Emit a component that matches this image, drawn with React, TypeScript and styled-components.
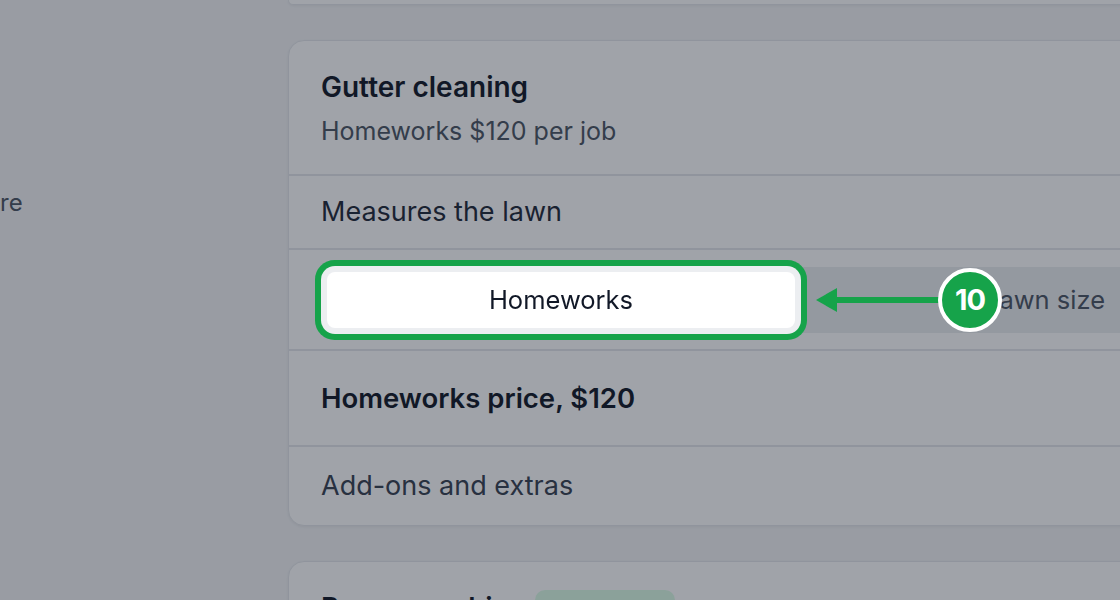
import React from 'react';
import styled, { createGlobalStyle } from 'styled-components';

const GlobalStyle = createGlobalStyle`
  html, body {
    margin: 0;
    padding: 0;
    background: #f3f4f6;
    overflow: hidden;
  }
  body {
    font-family: Inter, "Noto Sans", "Liberation Sans", sans-serif;
    color: #111827;
  }
`;

const App: React.FC = () => {
  return (
    <>
      <GlobalStyle />
      <Page>
        <Sidebar>
          <SideItem>re</SideItem>
        </Sidebar>

        <Main>
          <PrevCard />

          <Card>
            <Header>
              <Title>Gutter cleaning</Title>
              <Subtitle>Homeworks $120 per job</Subtitle>
            </Header>

            <Row $h={74}>
              <RowText>Measures the lawn</RowText>
            </Row>

            <Row $h={101}>
              <Track>
                <Segment $w={468} $active>
                  Homeworks
                </Segment>
                <Segment $w={500}>Lawn size</Segment>
              </Track>

              <Annotation>
                <Arrow width="123" height="26" viewBox="0 0 123 26">
                  <polygon points="0,13 21,1 21,25" fill="#16a34a" />
                  <rect x="18" y="10" width="105" height="6" fill="#16a34a" />
                </Arrow>
                <Badge>10</Badge>
              </Annotation>
            </Row>

            <Row $h={96}>
              <RowTitle>Homeworks price, $120</RowTitle>
            </Row>

            <Row $h={80}>
              <RowText $muted>Add-ons and extras</RowText>
            </Row>
          </Card>

          <Card>
            <Header>
              <TitleLine>
                <Title>Power washing</Title>
                <Pill>Most popular</Pill>
              </TitleLine>
              <Subtitle>Homeworks $90 per job</Subtitle>
            </Header>
          </Card>
        </Main>
      </Page>
      <Overlay />
    </>
  );
};

const Page = styled.div`
  display: flex;
  width: 1120px;
  height: 600px;
  overflow: hidden;
`;

const Sidebar = styled.aside`
  flex: none;
  width: 288px;
  padding-top: 187px;
  box-sizing: border-box;
`;

const SideItem = styled.div`
  font-size: 24px;
  line-height: 32px;
  color: #4b5563;
`;

const Main = styled.main`
  flex: none;
  width: 1060px;
  display: flex;
  flex-direction: column;
  gap: 35px;
`;

const Card = styled.section`
  background: #ffffff;
  border: 1px solid #e5e7eb;
  border-radius: 16px;
  box-shadow: 0 1px 3px rgba(0, 0, 0, 0.06);
  flex: none;
`;

const PrevCard = styled.div`
  height: 4px;
  background: #ffffff;
  border: 1px solid #e5e7eb;
  border-top: none;
  border-radius: 0 0 16px 16px;
  box-shadow: 0 1px 3px rgba(0, 0, 0, 0.06);
  flex: none;
`;

const Header = styled.div`
  padding: 28px 32px 27px;
`;

const TitleLine = styled.div`
  display: flex;
  align-items: center;
  gap: 8px;
`;

const Title = styled.h2`
  margin: 0;
  font-size: 28px;
  line-height: 36px;
  font-weight: 600;
  color: #111827;
`;

const Subtitle = styled.p`
  margin: 10px 0 0;
  font-size: 25px;
  line-height: 32px;
  color: #4b5563;
`;

const Pill = styled.span`
  display: inline-flex;
  align-items: center;
  height: 36px;
  width: 140px;
  justify-content: center;
  border-radius: 10px;
  background: #dcfce7;
  color: #15803d;
  font-size: 18px;
  font-weight: 500;
`;

const Row = styled.div<{ $h: number }>`
  position: relative;
  box-sizing: border-box;
  height: ${(p) => p.$h}px;
  padding: 0 32px;
  border-top: 2px solid #e5e7eb;
  display: flex;
  align-items: center;
`;

const RowText = styled.span<{ $muted?: boolean }>`
  font-size: 27px;
  line-height: 34px;
  color: ${(p) => (p.$muted ? '#374151' : '#1f2937')};
`;

const RowTitle = styled.span`
  font-size: 27.5px;
  line-height: 36px;
  font-weight: 600;
  color: #111827;
`;

const Track = styled.div`
  display: flex;
  padding: 5px 6px;
  border-radius: 12px;
  background: #eceef1;
`;

const Segment = styled.div<{ $w: number; $active?: boolean }>`
  width: ${(p) => p.$w}px;
  height: 56px;
  display: flex;
  align-items: center;
  justify-content: center;
  border-radius: 8px;
  font-size: 25.5px;
  color: ${(p) => (p.$active ? '#111827' : '#4b5563')};
  background: ${(p) => (p.$active ? '#ffffff' : 'transparent')};
  position: ${(p) => (p.$active ? 'relative' : 'static')};
  z-index: ${(p) => (p.$active ? 20 : 'auto')};
  box-shadow: ${(p) =>
    p.$active ? '0 0 0 6px #eceef1, 0 0 0 12px #16a34a' : 'none'};
`;

const Annotation = styled.div`
  position: absolute;
  left: 527px;
  top: 50%;
  transform: translateY(-50%);
  display: flex;
  align-items: center;
  z-index: 30;
`;

const Arrow = styled.svg`
  display: block;
  flex: none;
`;

const Badge = styled.div`
  width: 56px;
  height: 56px;
  border-radius: 50%;
  border: 4px solid #ffffff;
  background: #16a34a;
  color: #ffffff;
  font-size: 29px;
  font-weight: 700;
  letter-spacing: -1px;
  display: flex;
  align-items: center;
  justify-content: center;
  margin-left: -1px;
`;

const Overlay = styled.div`
  position: fixed;
  inset: 0;
  background: rgba(17, 24, 39, 0.4);
  z-index: 10;
`;

export default App;
